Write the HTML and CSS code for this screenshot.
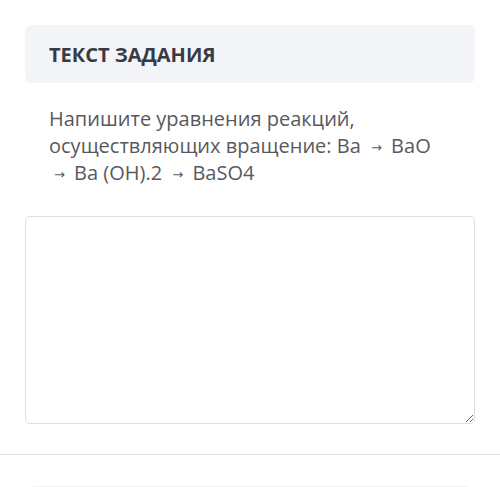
FILE: index.html
```html
<!DOCTYPE html>
<html lang="ru">
<head>
<meta charset="utf-8">
<link rel="stylesheet" href="styles.css">
</head>
<body>
<div class="page">
  <div class="task-head">ТЕКСТ ЗАДАНИЯ</div>
  <p class="task-text">Напишите уравнения реакций, осуществляющих вращение: Ba <span class="arr">→</span> BaO <span class="arr">→</span> Ba (OH).2 <span class="arr">→</span> BaSO4</p>
  <textarea class="answer"></textarea>
</div>
<div class="divider"></div>
<div class="bottom-bar"></div>
</body>
</html>
```
FILE: styles.css
```css
html, body {
  margin: 0;
  padding: 0;
  background: #ffffff;
  font-family: "Open Sans", "DejaVu Sans", sans-serif;
}
.page {
  padding: 25px 25px 0 25px;
}
.task-head {
  background: #f3f4f7;
  border-radius: 6px;
  height: 58px;
  box-sizing: border-box;
  padding: 0 24px;
  display: flex;
  align-items: center;
  font-weight: 700;
  font-size: 20px;
  color: #383b43;
}
.task-text {
  margin: 22px 0 0 0;
  padding: 0 24px;
  font-size: 20px;
  line-height: 27px;
  color: #58595d;
}
.arr {
  font-size: 13px;
  line-height: 1;
  vertical-align: 1px;
  margin: 0 4px 0 5px;
}
.answer {
  display: block;
  box-sizing: border-box;
  margin-top: 30px;
  width: 100%;
  height: 208px;
  border: 1px solid #dedede;
  border-radius: 5px;
  background: #fff;
  resize: vertical;
}
.divider {
  margin-top: 30px;
  height: 1px;
  background: #e3e3e3;
}
.bottom-bar {
  margin: 31px 33px 0 33px;
  height: 1px;
  background: #f2f2f2;
}
```
